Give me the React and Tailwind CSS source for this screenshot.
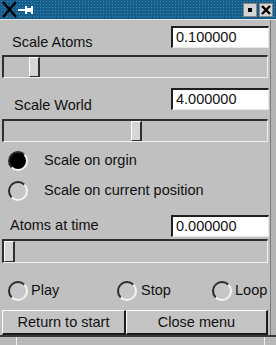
import React from 'react';

const font = { fontFamily: '"Liberation Sans", Arial, sans-serif' };

const Entry = ({ value }) => (
  <div className="w-[98px] h-[22px] bg-white border-t-2 border-l-2 border-t-[#202020] border-l-[#202020] border-b border-r border-b-[#e8e8e8] border-r-[#e8e8e8] flex items-center pl-[3px] text-[14.5px] leading-none text-[#111]">
    {value}
  </div>
);

const Slider = ({ pos, h = 'h-[23px]' }) => (
  <div className={`mx-[2px] ${h} border-t-2 border-l-2 border-t-[#303030] border-l-[#303030] border-b border-r border-b-[#f0f0f0] border-r-[#f0f0f0] bg-[#c0c0c0] flex`}>
    <div style={{ width: pos }} className="shrink-0" />
    <div className="w-[11px] h-full bg-[#d6d6d6] border-l border-t border-l-white border-t-white border-r-2 border-b border-r-[#303030] border-b-[#303030]" />
  </div>
);

const Radio = ({ checked }) => (
  <div
    className={`w-[20px] h-[20px] rounded-full shrink-0 border-2 border-t-[#2a2a2a] border-l-[#2a2a2a] border-b-[#f4f4f4] border-r-[#f4f4f4] ${
      checked ? 'bg-black' : 'bg-[#c6c6c6]'
    }`}
  />
);

export default function App() {
  return (
    <div style={font} className="w-[276px] h-[345px] bg-[#c0c0c0] flex flex-col overflow-hidden text-[#111]">
      {/* Title bar */}
      <div className="h-[20px] shrink-0 bg-[#155d8b] bg-[radial-gradient(#3d88b6_0.8px,transparent_0.9px)] bg-[length:3px_3px] flex items-center justify-between border-b border-b-[#e4e4e4]">
        <div className="flex items-center pl-[2px] gap-[1px]">
          <svg width="15" height="17" viewBox="0 0 15 17">
            <path d="M1 1 L14 16 M14 1 L1 16" stroke="#000" strokeWidth="2.4" />
          </svg>
          <svg width="16" height="10" viewBox="0 0 16 10">
            <path d="M0 5 H8" stroke="#fff" strokeWidth="2" />
            <path d="M8 1 V9 M14 1 V9 M8 5 H14" stroke="#fff" strokeWidth="2" />
            <rect x="9" y="3" width="4" height="4" fill="#fff" />
          </svg>
        </div>
        <div className="flex items-center gap-[2px] pr-[3px]">
          <div className="w-[14px] h-[14px] bg-[#d4d4d4] border border-[#888] flex items-center justify-center">
            <div className="w-[4px] h-[4px] bg-black" />
          </div>
          <div className="w-[14px] h-[14px] bg-[#d4d4d4] border border-[#888] flex items-center justify-center">
            <svg width="10" height="10" viewBox="0 0 10 10">
              <path d="M1 1 L9 9 M9 1 L1 9" stroke="#000" strokeWidth="2.4" />
            </svg>
          </div>
        </div>
      </div>

      <div className="flex flex-1 min-h-0">
        <div className="flex-1 flex flex-col">
          {/* Scale Atoms */}
          <div className="h-[35px] flex justify-between pt-[6px] pr-[1px]">
            <span className="pl-[12px] mt-[8px] text-[14.5px] leading-[16px]">Scale Atoms</span>
            <Entry value="0.100000" />
          </div>
          <Slider pos={25} />

          {/* Scale World */}
          <div className="h-[41px] flex justify-between pt-[10px] pr-[1px]">
            <span className="pl-[14px] mt-[9px] text-[14.5px] leading-[16px]">Scale World</span>
            <Entry value="4.000000" />
          </div>
          <Slider pos={127} />

          {/* Scale mode */}
          <div className="flex flex-col gap-[10px] pt-[9px] pl-[8px]">
            <div className="h-[20px] flex items-center">
              <Radio checked />
              <span className="ml-[16px] text-[14.5px]">Scale on orgin</span>
            </div>
            <div className="h-[20px] flex items-center">
              <Radio />
              <span className="ml-[16px] text-[14.5px]">Scale on current position</span>
            </div>
          </div>

          {/* Atoms at time */}
          <div className="h-[38px] flex justify-between items-end pb-[2px] pr-[1px]">
            <span className="pl-[10px] mb-[4px] text-[14.5px] leading-[16px]">Atoms at time</span>
            <Entry value="0.000000" />
          </div>
          <Slider pos={0} h="h-[24px]" />

          {/* Playback */}
          <div className="h-[45px] flex items-center pl-[8px] pt-[10px]">
            <div className="w-[109px] flex items-center gap-[3px]">
              <Radio />
              <span className="text-[14.5px]">Play</span>
            </div>
            <div className="w-[95px] flex items-center gap-[4px]">
              <Radio />
              <span className="text-[14.5px]">Stop</span>
            </div>
            <div className="flex items-center gap-[3px]">
              <Radio />
              <span className="text-[14.5px]">Loop</span>
            </div>
          </div>

          {/* Buttons */}
          <div className="h-[25px] mt-[2px] flex px-[2px]">
            <button className="w-[124px] h-full bg-[#c4c4c4] border-t border-l border-t-white border-l-white border-r-2 border-b-2 border-r-[#1a1a1a] border-b-[#1a1a1a] text-[14.5px] leading-none">
              Return to start
            </button>
            <button className="flex-1 h-full bg-[#c4c4c4] border-t border-l border-t-white border-l-white border-r-2 border-b-2 border-r-[#1a1a1a] border-b-[#1a1a1a] text-[14.5px] leading-none">
              Close menu
            </button>
          </div>
        </div>
        {/* Right frame */}
        <div className="w-[6px] shrink-0 border-l border-l-[#7a7a7a] bg-[#b4b4b4]" />
      </div>

      {/* Bottom frame */}
      <div className="h-[10px] shrink-0 border-t-2 border-t-[#3a3a3a] bg-[#b8b8b8] flex">
        <div className="w-[17px] border-r border-r-[#f0f0f0]" />
        <div className="flex-1" />
        <div className="w-[12px] border-l border-l-[#f0f0f0]" />
      </div>
    </div>
  );
}
